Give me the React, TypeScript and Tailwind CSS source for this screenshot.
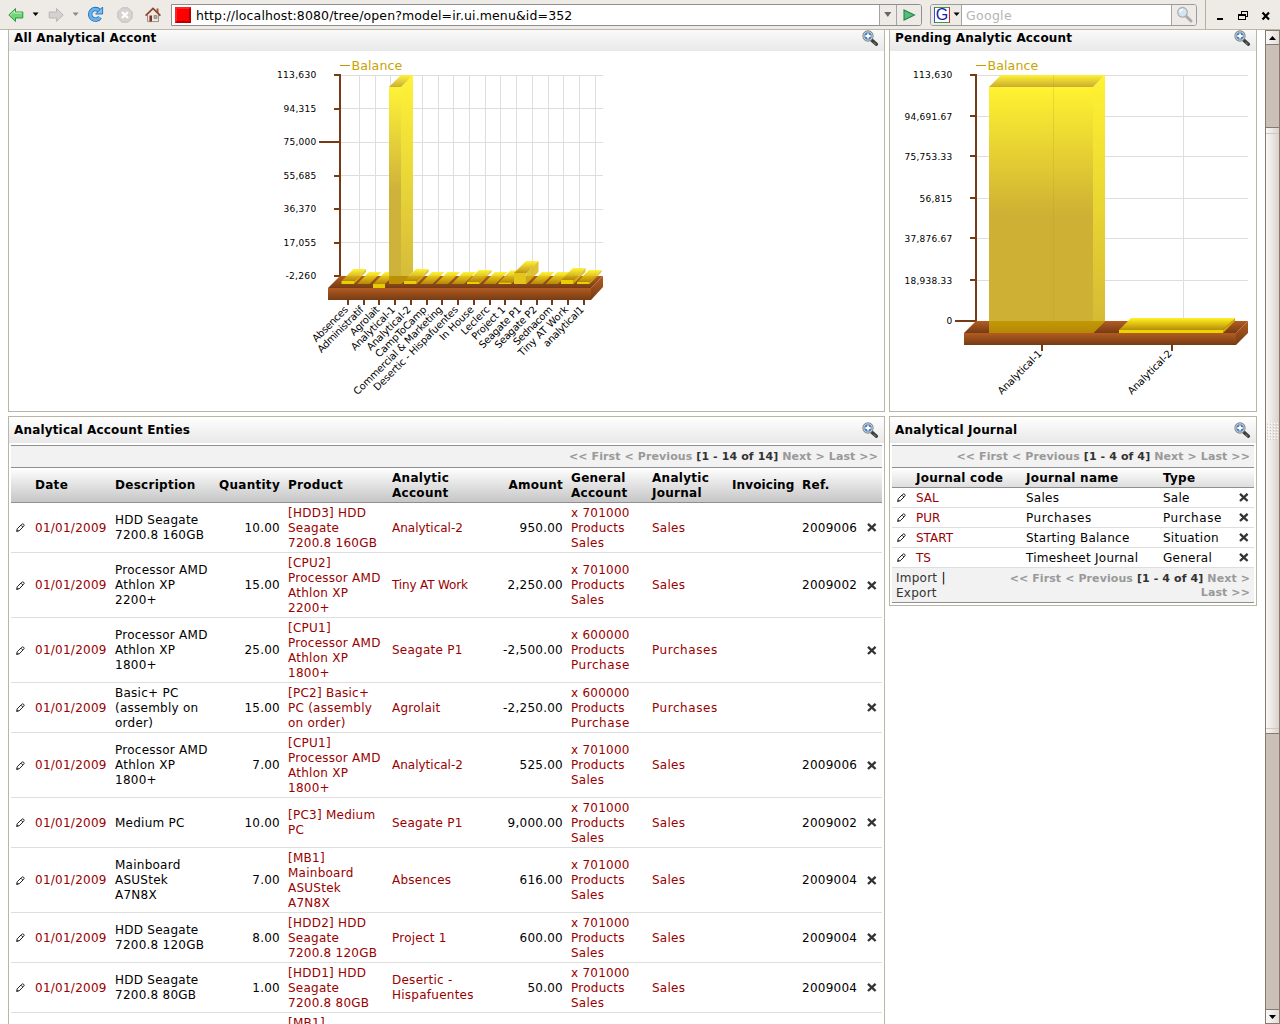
import React from "react";

const ENTRY_COLS = "grid grid-cols-[20px_80px_104px_69px_104px_112px_67px_81px_80px_70px_64px_20px]";
const JOURNAL_COLS = "grid grid-cols-[20px_110px_137px_75px_20px]";

type Entry = {
  desc: string; qty: string; product: string; account: string;
  amount: string; general: string; journal: string; ref: string;
};

const SALES = "x 701000\nProducts\nSales";
const PURCHASE = "x 600000\nProducts\nPurchase";

const entries: Entry[] = [
  { desc: "HDD Seagate\n7200.8 160GB", qty: "10.00", product: "[HDD3] HDD\nSeagate\n7200.8 160GB", account: "Analytical-2", amount: "950.00", general: SALES, journal: "Sales", ref: "2009006" },
  { desc: "Processor AMD\nAthlon XP\n2200+", qty: "15.00", product: "[CPU2]\nProcessor AMD\nAthlon XP\n2200+", account: "Tiny AT Work", amount: "2,250.00", general: SALES, journal: "Sales", ref: "2009002" },
  { desc: "Processor AMD\nAthlon XP\n1800+", qty: "25.00", product: "[CPU1]\nProcessor AMD\nAthlon XP\n1800+", account: "Seagate P1", amount: "-2,500.00", general: PURCHASE, journal: "Purchases", ref: "" },
  { desc: "Basic+ PC\n(assembly on\norder)", qty: "15.00", product: "[PC2] Basic+\nPC (assembly\non order)", account: "Agrolait", amount: "-2,250.00", general: PURCHASE, journal: "Purchases", ref: "" },
  { desc: "Processor AMD\nAthlon XP\n1800+", qty: "7.00", product: "[CPU1]\nProcessor AMD\nAthlon XP\n1800+", account: "Analytical-2", amount: "525.00", general: SALES, journal: "Sales", ref: "2009006" },
  { desc: "Medium PC", qty: "10.00", product: "[PC3] Medium\nPC", account: "Seagate P1", amount: "9,000.00", general: SALES, journal: "Sales", ref: "2009002" },
  { desc: "Mainboard\nASUStek\nA7N8X", qty: "7.00", product: "[MB1]\nMainboard\nASUStek\nA7N8X", account: "Absences", amount: "616.00", general: SALES, journal: "Sales", ref: "2009004" },
  { desc: "HDD Seagate\n7200.8 120GB", qty: "8.00", product: "[HDD2] HDD\nSeagate\n7200.8 120GB", account: "Project 1", amount: "600.00", general: SALES, journal: "Sales", ref: "2009004" },
  { desc: "HDD Seagate\n7200.8 80GB", qty: "1.00", product: "[HDD1] HDD\nSeagate\n7200.8 80GB", account: "Desertic -\nHispafuentes", amount: "50.00", general: SALES, journal: "Sales", ref: "2009004" },
  { desc: "", qty: "", product: "[MB1]\nMainboard\nASUStek\nA7N8X", account: "", amount: "", general: "", journal: "", ref: "" },
];

const journals = [
  ["SAL", "Sales", "Sale"],
  ["PUR", "Purchases", "Purchase"],
  ["START", "Starting Balance", "Situation"],
  ["TS", "Timesheet Journal", "General"],
];

function Pencil() {
  return (
    <svg width="9" height="9" viewBox="0 0 9 9" className="mb-px block" fill="none" stroke="#222" strokeWidth="1">
      <path d="M.7 8.3 1.2 5.8 5.6 1.4Q6.6.4 7.8 1.4 8.6 2.4 7.6 3.4L3.2 7.8Z" fill="#fff" />
      <path d="M5 2.2 6.8 4M.6 8.4 2.4 7.4" />
    </svg>
  );
}

function Cross() {
  return (
    <svg width="10" height="9" viewBox="0 0 10 9" className="mb-px block" stroke="#333" strokeWidth="2.3">
      <path d="M1 .8 8.6 8M8.6.8 1 8" />
    </svg>
  );
}

function ZoomIcon() {
  return (
    <svg width="17" height="17" viewBox="0 0 17 17" className="block shrink-0">
      <path d="M10 10.4 14.4 14.2" stroke="#3b3f3b" strokeWidth="3.4" strokeLinecap="round" />
      <path d="M11.6 12.4 13.8 14.2" stroke="#8b8f8a" strokeWidth="1" />
      <circle cx="6" cy="6" r="5" fill="#4f80bd" stroke="#838a85" strokeWidth="1.3" />
      <circle cx="6" cy="6" r="4.1" fill="none" stroke="#d5dfe9" strokeWidth=".9" />
      <path d="M6 3.4V8.6M3.4 6H8.6" stroke="#fff" strokeWidth="1.8" />
    </svg>
  );
}

function Title({ text, top }: { text: string; top?: boolean }) {
  return (
    <div className={top
      ? "flex h-[21px] shrink-0 items-start justify-between bg-linear-to-b from-[#fafafa] to-[#e8e8e8] pr-[5px] pl-[5px]"
      : "flex h-[26px] shrink-0 items-start justify-between bg-linear-to-b from-white to-[#e8e8e8] pr-[5px] pl-[5px] pt-[5px]"}>
      <h2 className="text-[12px] leading-[17px] font-bold tracking-[0.17px]">{text}</h2>
      <ZoomIcon />
    </div>
  );
}

function Pager({ range, wrap }: { range: string; wrap?: boolean }) {
  return (
    <div className="text-right text-[11px] leading-[14px] font-bold tracking-[0.1px] whitespace-pre text-[#999]">
      {"<< First < Previous "}
      <span className="text-[#333]">{range}</span>
      {wrap ? " Next >\nLast >>" : " Next > Last >>"}
    </div>
  );
}

type Bar3 = { x: number; y: number };

function Defs() {
  return (
    <defs>
      <linearGradient id="face" x1="0" y1="0" x2="0" y2="1">
        <stop offset="0" stopColor="#fff331" /><stop offset=".52" stopColor="#ceb034" /><stop offset="1" stopColor="#ceb034" />
      </linearGradient>
      <linearGradient id="side" x1="0" y1="0" x2="0" y2="1">
        <stop offset="0" stopColor="#fff331" /><stop offset="1" stopColor="#d3b834" />
      </linearGradient>
      <linearGradient id="cap" x1="0" y1="0" x2="0" y2="1">
        <stop offset="0" stopColor="#fff331" /><stop offset="1" stopColor="#c9ab32" />
      </linearGradient>
      <linearGradient id="thin" x1="0" y1="0" x2="0" y2="1">
        <stop offset="0" stopColor="#fff22a" /><stop offset=".2" stopColor="#f3df1a" /><stop offset="1" stopColor="#b88b08" />
      </linearGradient>
      <linearGradient id="wood" x1="0" y1="0" x2="0" y2="1">
        <stop offset="0" stopColor="#b35c21" /><stop offset="1" stopColor="#763b14" />
      </linearGradient>
      <linearGradient id="sunk" x1="0" y1="0" x2="0" y2="1">
        <stop offset="0" stopColor="#c29906" /><stop offset="1" stopColor="#b58805" />
      </linearGradient>
    </defs>
  );
}

const axisFont = { fontFamily: "DejaVu Sans, sans-serif", fontSize: 9.3, lengthAdjust: "spacingAndGlyphs" as const };
const slantFont = { fontFamily: "DejaVu Sans, sans-serif", fontSize: 10 };

const overviewTicks: [string, number, number][] = [
  ["113,630", 75, 39.5], ["94,315", 108.5, 33], ["75,000", 142, 33], ["55,685", 175.5, 33],
  ["36,370", 209, 33], ["17,055", 242.5, 33], ["-2,260", 276, 31],
];
const overviewLabels: [string, number][] = [
  ["Absences", 46], ["Administratif", 61], ["Agrolait", 37], ["Analytical-1", 58], ["Analytical-2", 58],
  ["CampToCamp", 68], ["Commercial & Marketing", 121], ["Desertic - Hispafuentes", 115], ["In House", 44],
  ["Leclerc", 36], ["Project 1", 43], ["Seagate P1", 55], ["Seagate P2", 55], ["Sednacom", 51], ["Tiny AT Work", 66], ["analytical1", 53],
];
const overviewTops: Bar3[] = [
  { x: 341.5, y: 281 }, { x: 357, y: 284 }, { x: 373, y: 284 }, { x: 388.5, y: 87 }, { x: 404, y: 281 }, { x: 420, y: 284 },
  { x: 435.5, y: 284 }, { x: 451.5, y: 284 }, { x: 467, y: 282 }, { x: 483, y: 284 }, { x: 498.5, y: 282.5 }, { x: 514, y: 273 },
  { x: 530, y: 284 }, { x: 545.5, y: 284 }, { x: 561, y: 280 }, { x: 577, y: 282 },
];

function OverviewChart() {
  return (
    <svg width="874" height="360" viewBox="9 51 874 360" className="block">
      <Defs />
      <path d="M340 65.5H350" stroke="#bf9a00" />
      <text x="351.5" y="70" fontFamily="DejaVu Sans, sans-serif" fontSize="12.6" fill="#c9a300" textLength="51">Balance</text>
      <g stroke="#dedede" shapeRendering="crispEdges">
        {overviewTicks.slice(0, 6).map(([l, y]) => <path key={l} d={`M340 ${Math.floor(y) + 0.5}H603`} />)}
        {overviewLabels.map(([l], i) => <path key={l} d={`M${Math.floor(359.5 + i * 15.72) + 0.5} 75V276`} />)}
      </g>
      <g stroke="#763b14" strokeWidth="2">
        <path d="M340 74V277" />
        {overviewTicks.map(([l, y]) => <path key={l} d={`M${l === "75,000" ? 319 : 334} ${Math.round(y)}H341`} />)}
        {overviewLabels.map(([l], i) => <path key={l} d={`M${Math.round(348 + i * 15.73)} 299V305`} />)}
      </g>
      {overviewTicks.map(([l, y, w]) => <text key={l} {...axisFont} x={316.5 - w} y={y + 3} textLength={w}>{l}</text>)}
      <path d="M340 276H603L591 288H328Z" fill="url(#wood)" />
      <path d="M328 288H591V300H328Z" fill="url(#wood)" />
      <path d="M591 288 603 276V287L591 300Z" fill="url(#wood)" />
      {overviewTops.map(({ x, y }, i) => {
        if (i === 3) {
          return (
            <g key={x} opacity=".97">
              <path d="M389 87H401V284H389Z" fill="url(#face)" />
              <path d="M401 87 413 75V272L401 284Z" fill="url(#side)" />
              <path d="M389 87 401 75H413L401 87Z" fill="url(#cap)" />
              <path d="M389 276H409L401 284H389Z" fill="#bd9206" />
            </g>
          );
        }
        if (i === 2) {
          return <g key={x}><path d="M373 284 385 272H397L385 284Z" fill="url(#thin)" opacity=".92" /><path d="M373 284H385V288H373Z" fill="#e5cc00" /></g>;
        }
        return (
          <g key={x}>
            <path d={`M${x + 12.5} ${y} ${x + 24.5} ${y - 12}V272L${x + 12.5} 284Z`} fill="#d8b910" opacity=".85" />
            <path d={`M${x} ${y} ${x + 12} ${y - 12}H${x + 24.5}L${x + 12.5} ${y}Z`} fill="url(#thin)" opacity=".92" />
            {y < 284 && <path d={`M${x} ${y}H${x + 12.5}V284H${x}Z`} fill={i === 11 ? "#e3c51c" : "#e8cf00"} />}
          </g>
        );
      })}
      {overviewLabels.map(([l, w], i) => (
        <text key={l} {...slantFont} textLength={w} transform={`translate(${348.8 + i * 15.73} 310) rotate(-45) translate(${-w} 0)`}>{l}</text>
      ))}
    </svg>
  );
}

const pendingTicks: [string, number, number][] = [
  ["113,630", 75, 39.5], ["94,691.67", 117, 48], ["75,753.33", 157, 48], ["56,815", 198.5, 33],
  ["37,876.67", 239, 48], ["18,938.33", 280.5, 48], ["0", 321, 6],
];

function PendingChart() {
  return (
    <svg width="366" height="360" viewBox="890 51 366 360" className="block">
      <Defs />
      <path d="M976 65.5H986" stroke="#bf9a00" />
      <text x="987.5" y="70" fontFamily="DejaVu Sans, sans-serif" fontSize="12.6" fill="#c9a300" textLength="51">Balance</text>
      <g stroke="#dedede" shapeRendering="crispEdges">
        {pendingTicks.slice(0, 6).map(([l, y]) => <path key={l} d={`M976 ${Math.floor(y - 0.5) + (l === "113,630" ? 1.5 : 0.5)}H1248`} />)}
        <path d="M1053.5 75V321M1183.5 75V321" />
      </g>
      <g stroke="#763b14" strokeWidth="2">
        <path d="M976 74V322" />
        {pendingTicks.map(([l, y]) => <path key={l} d={`M${l === "0" ? 955 : 970} ${Math.floor(y - 0.4) + (l === "113,630" || l === "0" ? 1 : 0)}H977`} />)}
        <path d="M1042 345V351M1172 345V351" />
      </g>
      {pendingTicks.map(([l, y, w]) => <text key={l} {...axisFont} x={952.5 - w} y={y + 3} textLength={w}>{l}</text>)}
      <path d="M976 321H1248L1236 333H964Z" fill="url(#wood)" />
      <path d="M964 333H1236V345H964Z" fill="url(#wood)" />
      <path d="M1236 333 1248 321V333L1236 345Z" fill="url(#wood)" />
      <path d="M989 87H1093V333H989Z" fill="url(#face)" />
      <path d="M1093 87 1105 75V321L1093 333Z" fill="url(#side)" />
      <path d="M989 87 1001 75H1105L1093 87Z" fill="url(#cap)" />
      <path d="M989 321H1105L1093 333H989Z" fill="url(#sunk)" />
      <path d="M1053.5 75V321" stroke="#b99b20" opacity=".25" />
      <path d="M1119 330 1131 318H1235L1223 330Z" fill="url(#thin)" />
      <path d="M1223 330 1235 318V321L1223 333Z" fill="#c9a908" />
      <path d="M1119 330H1223V333H1119Z" fill="#ead500" />
      {["Analytical-1", "Analytical-2"].map((l, i) => (
        <text key={l} {...slantFont} textLength="58" transform={`translate(${1042.8 + i * 130} 354) rotate(-45) translate(-58 0)`}>{l}</text>
      ))}
    </svg>
  );
}

function Caret({ className }: { className: string }) {
  return <svg width="8" height="5" viewBox="0 0 8 5" className={className} fill="currentColor"><path d="M.6 .5H6.6L3.6 4Z" /></svg>;
}

function Toolbar() {
  return (
    <header className="flex h-[30px] shrink-0 items-center border-b border-[#bbb6a6] bg-[#eeebe7]">
      <svg width="16" height="16" viewBox="0 0 16 16" className="ml-2 shrink-0">
        <path d="M.8 8 7.5 1.5V5H14.8V11H7.5V14.5Z" fill="#72d477" stroke="#2b9a45" />
        <path d="M2.4 8 6.5 4V6H13.8" fill="none" stroke="#c6f2c4" />
      </svg>
      <Caret className="ml-[8px] text-black" />
      <svg width="16" height="16" viewBox="0 0 16 16" className="ml-[8px] shrink-0">
        <path d="M15.2 8 8.5 1.5V5H1.2V11H8.5V14.5Z" fill="#d3d2d0" stroke="#b9b7b4" />
      </svg>
      <Caret className="ml-[8px] text-[#888]" />
      <svg width="17" height="17" viewBox="0 0 17 17" className="ml-[7px] shrink-0">
        <path d="M12.9 11.2A5.3 5.3 0 1 1 12.2 4.6" fill="none" stroke="#1f6db5" strokeWidth="4.4" />
        <path d="M12.9 11.2A5.3 5.3 0 1 1 12.2 4.6" fill="none" stroke="#65b4ee" strokeWidth="2.8" />
        <path d="M15.6 1V8H8.6Z" fill="#7cc0f2" stroke="#1f6db5" strokeWidth=".9" />
      </svg>
      <svg width="16" height="16" viewBox="0 0 16 16" className="ml-[13px] shrink-0">
        <path d="M5 .8H11L15.2 5V11L11 15.2H5L.8 11V5Z" fill="#d5d3d0" stroke="#c2c0bd" />
        <path d="M5 5 11 11M11 5 5 11" stroke="#fff" strokeWidth="2.4" />
      </svg>
      <svg width="16" height="16" viewBox="0 0 16 16" className="ml-[12px] shrink-0">
        <path d="M11.5 1.5H13.5V6H11.5Z" fill="#a65b45" />
        <path d="M2.5 7.5 8 2 13.5 7.5V14.6H2.5Z" fill="#f0e8dc" stroke="#8c7b6b" strokeWidth=".8" />
        <path d="M.6 8.6 8 1.4 15.4 8.6" fill="none" stroke="#8a4634" strokeWidth="1.7" />
        <path d="M4.4 8.5H7V14.5H4.4Z" fill="#8b2f2b" />
        <path d="M9 8.5H12V11.5H9Z" fill="#9bafc4" stroke="#776" strokeWidth=".6" />
      </svg>
      <div className="ml-[10px] flex h-[22px] w-[751px] overflow-hidden rounded-r-[3px] border border-[#8d8f93] bg-white">
        <div className="mt-[2px] ml-[3px] size-4 shrink-0 border-2 border-t-[#f22] border-r-[#b80000] border-b-[#b80000] border-l-[#f22] bg-[#fe0000]" />
        <div className="ml-[5px] flex-1 text-[12.5px] leading-[21px] tracking-[0.13px] whitespace-nowrap text-black">
          http://localhost:8080/tree/open?model=ir.ui.menu&amp;id=352
        </div>
        <div className="flex w-[17px] items-center justify-center border-l border-[#a5a4a2] bg-[#eeebe7] text-[#666]">
          <svg width="8" height="6" viewBox="0 0 8 6" fill="currentColor"><path d="M.3 0H7.3L3.8 5Z" /></svg>
        </div>
        <div className="flex w-[25px] items-center justify-center border-l border-[#a5a4a2] bg-[#eeebe7]">
          <svg width="13" height="12" viewBox="0 0 13 12"><path d="M1 .9 11.5 6 1 11.1Z" fill="#59bb7f" stroke="#238547" strokeWidth="1.1" /></svg>
        </div>
      </div>
      <div className="ml-2 flex h-[22px] w-[267px] overflow-hidden rounded-[3px] border border-[#9a9b9d] bg-white">
        <div className="flex w-[31px] items-center border-r border-[#a5a4a2] bg-[#eeebe7] pl-[3px]">
          <div className="flex size-4 shrink-0 items-center justify-center border border-t-[#3a9a48] border-r-[#e21b1b] border-b-[#3a9a48] border-l-[#2a52c9] bg-white font-['Liberation_Sans',sans-serif] text-[16px] leading-none tracking-normal text-[#0b25a5]">G</div>
          <Caret className="ml-[3px] shrink-0 text-black" />
        </div>
        <div className="flex-1 pl-[4px] text-[12.5px] leading-[21px] tracking-[0.3px] text-[#b4b4b4]">Google</div>
        <div className="flex w-[25px] items-center justify-center border-l border-[#a5a4a2] bg-[#eeebe7]">
          <svg width="17" height="17" viewBox="0 0 17 17">
            <path d="M10 10 15 15" stroke="#a9acad" strokeWidth="3" strokeLinecap="round" />
            <circle cx="6.5" cy="6.3" r="4.8" fill="#d4e6f2" stroke="#abb1b4" strokeWidth="1.3" />
            <path d="M4 6A3 3 0 0 1 7 3.4" fill="none" stroke="#fff" strokeWidth="1.4" />
          </svg>
        </div>
      </div>
      <div className="ml-2 h-[29px] w-px bg-[#b8b09f]" />
      <svg width="60" height="14" viewBox="0 0 60 14" className="ml-[6px] shrink-0" shapeRendering="crispEdges">
        <path d="M5 10H11V12H5Z" />
        <path d="M29 3.5H35V8H29ZM28.5 3H35.5" fill="none" stroke="#000" />
        <path d="M26.5 7.5H33V11.5H26.5ZM26 6.8H33.5" fill="#eeebe7" stroke="#000" />
        <path d="M50.5 4.5 57 11.5M57 4.5 50.5 11.5" stroke="#000" strokeWidth="2.2" shapeRendering="auto" />
      </svg>
    </header>
  );
}

function ScrollButton({ down }: { down?: boolean }) {
  return (
    <div className="flex h-[15px] shrink-0 items-center justify-center border-y border-[#857970] bg-linear-to-r from-[#faf9f8] to-[#e3ddd8]">
      <svg width="7" height="4" viewBox="0 0 7 4"><path d={down ? "M0 0H7L3.5 4Z" : "M0 4H7L3.5 0Z"} /></svg>
    </div>
  );
}

function Scrollbar() {
  return (
    <div className="flex w-[15px] shrink-0 flex-col border-x border-[#857970] bg-[#cac0b7]">
      <ScrollButton />
      <div className="mt-[82px] flex h-[607px] flex-col justify-between border-y border-[#857970] bg-linear-to-r from-[#faf9f8] to-[#dad2cc]">
        <div className="mt-[5px] h-px bg-[#cfc8c1]" />
        <div className="grid grid-cols-4 gap-px self-center">
          {Array.from({ length: 24 }, (_, i) => <span key={i} className="size-[2px] border-t border-l border-t-white border-l-[#cfc8c1]" />)}
        </div>
        <div className="mb-1 h-px bg-[#cfc8c1]" />
      </div>
      <div className="mt-auto"><ScrollButton down /></div>
    </div>
  );
}

const cell = "px-1 whitespace-pre";
const link = "px-1 whitespace-pre text-[#990000]";

function Name({ text }: { text: string }) {
  if (text === "Analytical-2") return <span className="tracking-normal">{text}</span>;
  if (text === "Tiny AT Work") return <span className="tracking-[-0.15px]">{text}</span>;
  if (text.startsWith("Purchase")) return <span className="tracking-[0.55px]">{text}</span>;
  return <>{text}</>;
}

function Lines({ text }: { text: string }) {
  return <>{text.split("\n").map((l) => <div key={l}><Name text={l} /></div>)}</>;
}

function EntriesPanel() {
  return (
    <section className="mt-[4px] flex h-[760px] flex-col border border-[#b9b6a4] bg-white">
      <Title text="Analytical Account Enties" />
      <div className="mx-[2px] mt-[2px]">
        <div className="h-[23px] border-y border-[#8f8f8f] bg-[#f2f2f2] pt-[4px] pr-[4px]"><Pager range="[1 - 14 of 14]" /></div>
        <div className={ENTRY_COLS + " h-[35px] items-center border-b border-[#8f8f8f] bg-linear-to-b from-white to-[#c6c6c6] pt-px font-bold tracking-[0.28px]"}>
          <div />
          <div className={cell}>Date</div>
          <div className={cell}>Description</div>
          <div className="pr-1 text-right">Quantity</div>
          <div className={cell}>Product</div>
          <div className={cell}>{"Analytic\nAccount"}</div>
          <div className="pr-1 text-right">Amount</div>
          <div className={cell}>{"General\nAccount"}</div>
          <div className={cell}>{"Analytic\nJournal"}</div>
          <div className="pl-1 tracking-[0.1px]">Invoicing</div>
          <div className={cell}>Ref.</div>
          <div />
        </div>
        {entries.map((e, i) => (
          <div key={i} className={ENTRY_COLS + " items-center border-b border-[#dedede] pt-[2.5px] pb-[1.5px]"}>
            <div className="pl-[5px]">{e.qty && <Pencil />}</div>
            <div className={link}>{e.qty && "01/01/2009"}</div>
            <div className={cell}>{e.desc}</div>
            <div className="pr-1 text-right">{e.qty}</div>
            <div className={link}>{e.product}</div>
            <div className={link}><Lines text={e.account} /></div>
            <div className="pr-1 text-right">{e.amount}</div>
            <div className={link}><Lines text={e.general} /></div>
            <div className={link}><Name text={e.journal} /></div>
            <div />
            <div className={cell}>{e.ref}</div>
            <div className="pl-[5px]">{e.qty && <Cross />}</div>
          </div>
        ))}
      </div>
    </section>
  );
}

function JournalPanel() {
  return (
    <section className="mt-[4px] flex h-[190px] flex-col border border-[#b9b6a4] bg-white">
      <Title text="Analytical Journal" />
      <div className="mx-[2px] mt-[2px]">
        <div className="h-[23px] border-y border-[#8f8f8f] bg-[#f2f2f2] pt-[4px] pr-[4px]"><Pager range="[1 - 4 of 4]" /></div>
        <div className={JOURNAL_COLS + " h-5 items-center border-b border-[#8f8f8f] bg-linear-to-b from-white to-[#dedede] pt-px font-bold tracking-[0.25px]"}>
          <div />
          <div className={cell}>Journal code</div>
          <div className={cell}>Journal name</div>
          <div className={cell}>Type</div>
          <div />
        </div>
        {journals.map(([code, name, type]) => (
          <div key={code} className={JOURNAL_COLS + " h-5 items-center border-b border-[#dedede] pt-px"}>
            <div className="pl-[5px]"><Pencil /></div>
            <div className={link + " tracking-normal"}>{code}</div>
            <div className={cell}><Name text={name} /></div>
            <div className={cell}><Name text={type} /></div>
            <div className="pl-[5px]"><Cross /></div>
          </div>
        ))}
        <div className="flex h-[35px] items-start justify-between border-b border-[#8f8f8f] bg-[#f2f2f2] pt-[3px] pr-[4px] pl-1">
          <div className="whitespace-pre text-[#333]">Import <span className="text-black">|</span>{"\nExport"}</div>
          <div className="pt-px"><Pager range="[1 - 4 of 4]" wrap /></div>
        </div>
      </div>
    </section>
  );
}

export default function App() {
  return (
    <div className="flex h-[1024px] w-[1280px] flex-col overflow-hidden bg-white font-['DejaVu_Sans',sans-serif] text-[12px] leading-[15px] tracking-[0.25px] text-black">
      <Toolbar />
      <div className="flex min-h-0 flex-1">
        <main className="flex min-h-0 flex-1 gap-1 overflow-hidden pl-2">
          <div className="w-[877px] shrink-0">
            <section className="h-[382px] border-x border-b border-[#b9b6a4]">
              <Title text="All Analytical Accont" top />
              <OverviewChart />
            </section>
            <EntriesPanel />
          </div>
          <div className="w-[368px] shrink-0">
            <section className="h-[382px] border-x border-b border-[#b9b6a4]">
              <Title text="Pending Analytic Account" top />
              <PendingChart />
            </section>
            <JournalPanel />
          </div>
        </main>
        <Scrollbar />
      </div>
    </div>
  );
}
